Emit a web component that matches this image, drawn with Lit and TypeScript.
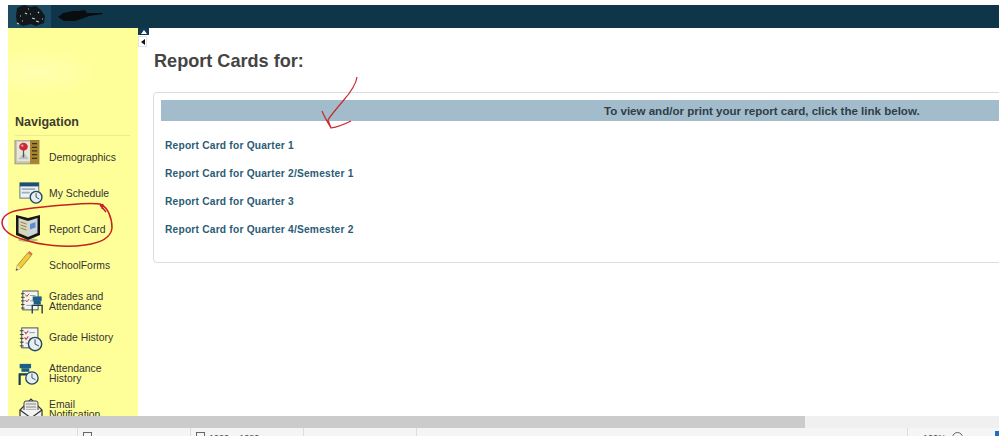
import { LitElement, html, css, svg } from "lit";
import { customElement } from "lit/decorators.js";

const clock = (cx: number, cy: number, r: number) => svg`
  <circle cx=${cx} cy=${cy} r=${r} fill="#e8eef2" stroke="#24475c" stroke-width="1.5"/>
  <path d="M${cx} ${cy - r + 2}V${cy}L${cx + r - 3} ${cy + 2}" fill="none" stroke="#24475c" stroke-width="1"/>`;

const checklist = svg`
  <rect x="5" y="2" width="17" height="21" fill="#f4f4ee" stroke="#3b4a55" stroke-width="1"/>
  <path d="M3 5h4M3 9h4M3 13h4M3 17h4M3 21h4" stroke="#333" stroke-width="1"/>
  <path d="M8 6l1.500 2 2.500-3M8 12l1.500 2 2.500-3" fill="none" stroke="#c8383c" stroke-width="1.100"/>
  <path d="M13 7h6M13 13h6M9 18h9" stroke="#8a9aa5" stroke-width="1"/>`;

const ICONS: Record<string, unknown> = {
  demographics: svg`<g transform="translate(0,-1) scale(1,.92)">
    <rect x="1" y="1" width="24" height="26" fill="#c9c7b0" stroke="#99977f"/>
    <rect x="3" y="3" width="13" height="21" fill="#e7e6d8"/>
    <rect x="16" y="1" width="9" height="26" fill="#a8842e"/>
    <path d="M4 22l6-7 5 7z" fill="#b9c2c8"/>
    <path d="M9.500 12v8" stroke="#555" stroke-width="1.200"/>
    <circle cx="9.500" cy="8.500" r="4.300" fill="#c92a35"/>
    <circle cx="8.300" cy="7.300" r="1.200" fill="#f2a3a6"/>
    <path d="M18 5h5M18 9h5M18 13h5M18 17h5M18 21h5" stroke="#3a3216" stroke-width="1.400"/>
  </g>`,
  schedule: svg`<g transform="translate(5,5) scale(.9)">
    <rect x="1" y="2" width="21" height="17" fill="#eef2f5" stroke="#4a6b80"/>
    <rect x="1" y="2" width="21" height="4" fill="#1d4f73"/>
    <path d="M3 9h15M3 13h9" stroke="#9ab0bf" stroke-width="2"/>
    ${clock(19, 18, 6.5)}
  </g>`,
  report: svg`<g transform="translate(1,1)">
    <ellipse cx="13" cy="27" rx="10" ry="1.800" fill="#8a8a60" opacity=".55"/>
    <path d="M1 2l12 3 12-3v20l-12 5-12-5z" fill="#17181a"/>
    <path d="M3.500 5l9.500 3v16l-9.500-4z" fill="#d8d6b4"/>
    <path d="M22.500 5l-9.500 3v16l9.500-4z" fill="#cfd6da"/>
    <path d="M5.500 9l6 2M5.500 12l6 2M5.500 15l6 2" stroke="#85836a" stroke-width="1"/>
    <path d="M15 11l5.500-2v5.500l-5.500 2z" fill="#5c8fd0"/>
  </g>`,
  forms: svg`<g transform="translate(-1.400,2.100) scale(.85)">
    <path d="M4 24l1.500-6L18 3l4 3.400L9.500 21.500z" fill="#f0cb3c" stroke="#8a7428" stroke-width=".8"/>
    <path d="M18 3l1.700-2 4 3.400-1.700 2z" fill="#d8705a"/>
    <path d="M4 24l1.500-6 4 3.500z" fill="#efe1bd"/>
    <path d="M4 24l.6-2.300 1.700 1.400z" fill="#333"/>
  </g>`,
  grades: svg`<g transform="translate(4.300,5.200) scale(.9)">
    ${checklist}
    <rect x="16" y="8" width="10" height="5" fill="#1d5e86"/>
    <rect x="17" y="13" width="8" height="4" fill="#1d5e86"/>
    <path d="M15.500 27V18h11v9" fill="none" stroke="#1c3a4d" stroke-width="1.500"/>
  </g>`,
  history: svg`<g transform="translate(3,6) scale(.95)">
    ${checklist}
    ${clock(19, 19, 7)}
  </g>`,
  attendance: svg`<g transform="translate(3,7) scale(.88)">
    <rect x="3" y="1" width="13" height="5" fill="#1d5e86"/>
    <rect x="5" y="6" width="9" height="4" fill="#1d5e86"/>
    <path d="M3 25V13h10" fill="none" stroke="#163d56" stroke-width="2.500"/>
    ${clock(17, 17, 7)}
  </g>`,
  email: svg`<g transform="translate(4,4)">
    <path d="M2 14L13 3l11 11v14H2z" fill="#eef0f0" stroke="#333" stroke-width="1.200"/>
    <rect x="6" y="5" width="14" height="12" rx="2" fill="#e8e8e2" stroke="#444"/>
    <path d="M8 8h10M8 11h10M8 14h10" stroke="#8a8a8a"/>
    <path d="M2 14l11 8 11-8" fill="#f4f4f4" stroke="#333" stroke-width="1.200"/>
  </g>`,
};

const NAV: { icon: string; label: unknown }[] = [
  { icon: "demographics", label: "Demographics" },
  { icon: "schedule", label: "My Schedule" },
  { icon: "report", label: "Report Card" },
  { icon: "forms", label: "SchoolForms" },
  { icon: "grades", label: html`Grades and<br />Attendance` },
  { icon: "history", label: "Grade History" },
  { icon: "attendance", label: html`Attendance<br />History` },
  { icon: "email", label: html`Email<br />Notification` },
];

const LINKS = [
  "Report Card for Quarter 1",
  "Report Card for Quarter 2/Semester 1",
  "Report Card for Quarter 3",
  "Report Card for Quarter 4/Semester 2",
];

@customElement("app-root")
export class AppRoot extends LitElement {
  static styles = css`
    :host {
      display: flex;
      flex-direction: column;
      position: relative;
      width: 999px;
      height: 436px;
      overflow: hidden;
      background: #fff;
      font-family: "Liberation Sans", Arial, sans-serif;
      color: #333;
    }
    .window {
      flex: 1;
      min-height: 0;
      display: flex;
      flex-direction: column;
      padding: 5px 0 0 8px;
    }
    .topbar {
      height: 23px;
      flex: none;
      display: flex;
      align-items: stretch;
      background: #0f3549;
    }
    .logo {
      width: 43px;
      background: #1b4a63;
    }
    .logo svg, .brand svg { display: block; }
    .brand { margin-left: 5px; }
    .body {
      flex: 1;
      min-height: 0;
      display: flex;
      position: relative;
    }
    .side {
      width: 130px;
      flex: none;
      background:
        radial-gradient(ellipse 60px 24px at 30px 44px, #ffffb0 0%, #ffffa4 60%, transparent 100%),
        #ffff99;
      overflow: hidden;
      padding: 87px 8px 0 7px;
      box-sizing: border-box;
    }
    .side h2 {
      margin: 0;
      font-size: 12.500px;
      line-height: 15px;
      font-weight: 700;
      color: #3d3d30;
      padding-bottom: 5px;
      border-bottom: 1px solid #ecec90;
    }
    .nav {
      list-style: none;
      margin: 0;
      padding: 4px 0 0;
    }
    .nav li {
      height: 36px;
      display: flex;
      align-items: center;
    }
    .icon {
      width: 30px;
      height: 36px;
      flex: none;
      margin-right: 5px;
      margin-left: -1px;
    }
    .nav span {
      font-size: 10.400px;
      line-height: 10px;
      color: #333;
    }
    .toggles {
      width: 11px;
      flex: none;
      display: flex;
      flex-direction: column;
      gap: 1px;
    }
    .t-up {
      height: 7px;
      background: #123a50;
      display: flex;
      align-items: center;
      justify-content: center;
    }
    .t-up i {
      border: 3.500px solid transparent;
      border-top: 0;
      border-bottom: 4px solid #fff;
    }
    .t-left {
      width: 9px;
      height: 11px;
      background: #fff;
      border: 1px solid #e4e4e4;
      box-sizing: border-box;
      display: flex;
      align-items: center;
      justify-content: center;
    }
    .t-left i {
      border: 3px solid transparent;
      border-left: 0;
      border-right: 4px solid #111;
    }
    .main {
      flex: 1;
      min-width: 0;
      padding: 22px 0 0 4px;
    }
    h1 {
      margin: 0 0 20px 1px;
      font-size: 18.100px;
      line-height: 22px;
      font-weight: 700;
      color: #444;
    }
    .card {
      width: 1200px;
      height: 171px;
      box-sizing: border-box;
      border: 1px solid #dcdcdc;
      border-radius: 4px;
      padding: 7px;
    }
    .banner {
      height: 21px;
      background: #a3bccb;
      font-size: 11.560px;
      font-weight: 700;
      line-height: 22px;
      color: #2f3e48;
      padding-left: 443px;
    }
    .links {
      list-style: none;
      margin: 0;
      padding: 11px 0 0 4px;
    }
    .links li {
      height: 28px;
      line-height: 28px;
      font-size: 10.200px;
      font-weight: 700;
      letter-spacing: .22px;
      color: #2a5c75;
    }
    .hscroll {
      height: 12px;
      flex: none;
      background: #f0f0f0;
    }
    .hscroll div {
      width: 805px;
      height: 100%;
      background: #cbcbcb;
    }
    .status {
      height: 8px;
      flex: none;
      overflow: hidden;
      background: #f5f5f5;
      display: grid;
      grid-template-columns: 78px 113px 113px 113px 491px 91px;
      font-size: 9px;
      line-height: 12px;
      color: #444;
    }
    .status div {
      display: flex;
      border-right: 1px solid #dedede;
      padding: 4px 0 0 5px;
      white-space: nowrap;
    }
    .status .zoom { border: 0; padding-left: 15px; }
    .zoombox {
      flex: none;
      width: 9px;
      height: 9px;
      border: 1px solid #666;
      margin-right: 4px;
      box-sizing: border-box;
    }
    .zoomround { border-radius: 50%; width: 11px; height: 11px; margin: 0 0 0 6px; }
    .zoomend { flex: none; width: 4px; height: 6px; margin: -1px 0 0 auto; background: #1f6fc0; }
    .marks {
      position: absolute;
      left: 0;
      top: 0;
      width: 999px;
      height: 436px;
      pointer-events: none;
    }
  `;

  render() {
    return html`
      <div class="window">
        <div class="topbar">
          <div class="logo">
            <svg width="43" height="23" viewBox="0 0 43 23">
              <path d="M9 3l7-3 6 2 6-1 5 4 4 6-1 7-8 3-5-2-8 2-6-3-1-7z" fill="#12171b"/>
              <path d="M9 18l2 1M17 8l2 1M24 13l3 1M28 16l3 1M12 11h1M20 4h1M14 16h1M30 7l1 1M22 9h1M34 14h1" stroke="#c4d3da" stroke-width="1.200"/>
            </svg>
          </div>
          <div class="brand">
            <svg width="60" height="23" viewBox="0 0 60 23">
              <path d="M2 12l5-4 10-2h5l7-1 2 3h15l1 1-14 2-5 2-9 3-11 0z" fill="#0a0d0f"/>
            </svg>
          </div>
        </div>
        <div class="body">
          <aside class="side">
            <h2>Navigation</h2>
            <ul class="nav">
              ${NAV.map(
                (n) => html`<li>
                  <svg class="icon" viewBox="0 0 30 36">${ICONS[n.icon]}</svg>
                  <span>${n.label}</span>
                </li>`
              )}
            </ul>
          </aside>
          <div class="toggles">
            <div class="t-up"><i></i></div>
            <div class="t-left"><i></i></div>
          </div>
          <main class="main">
            <h1>Report Cards for:</h1>
            <section class="card">
              <div class="banner">To view and/or print your report card, click the link below.</div>
              <ul class="links">
                ${LINKS.map((l) => html`<li>${l}</li>`)}
              </ul>
            </section>
          </main>
        </div>
      </div>
      <div class="hscroll"><div></div></div>
      <div class="status">
        <div></div>
        <div><span class="zoombox"></span></div>
        <div><span class="zoombox"></span>1920 × 1080</div>
        <div></div>
        <div></div>
        <div class="zoom">100%<span class="zoombox zoomround"></span><span class="zoomend"></span></div>
      </div>
      <svg class="marks" viewBox="0 0 999 436">
        <path d="M357 77C356 85 350 93 343 101C337 108 331 115 328 120L331 128C338 127 345 124 351 121M322 111C324 116 328 123 331 128"
          fill="none" stroke="#c8282c" stroke-width="1.200"/>
        <path d="M2 222C3 213 14 210 33 208C60 205 90 202 100 204C108 207 112 218 112 228C111 238 100 243 85 245C65 248 40 245 25 240C10 236 2 230 2 222ZM100 205L106 212M103 204L102 209"
          fill="none" stroke="#c62020" stroke-width="1.500"/>
      </svg>
    `;
  }
}
